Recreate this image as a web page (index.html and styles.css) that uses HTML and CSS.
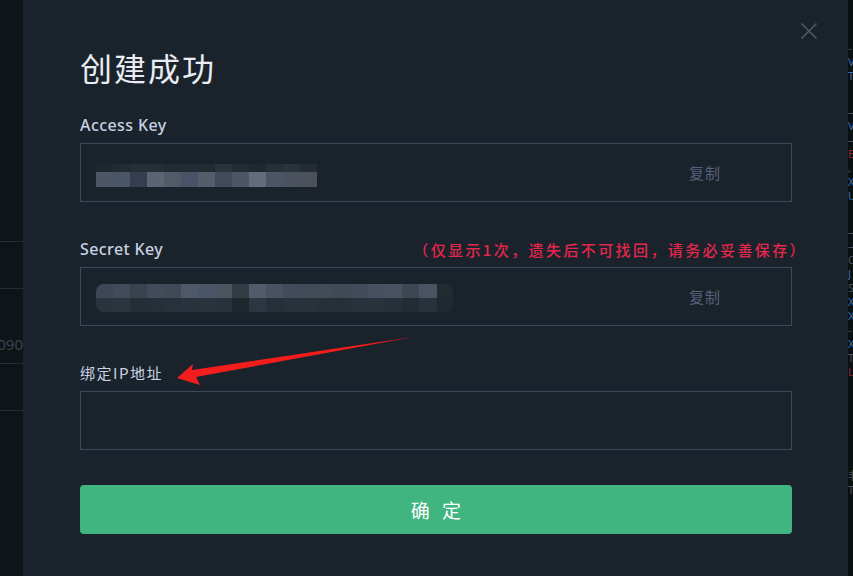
FILE: index.html
```html
<!DOCTYPE html>
<html lang="zh-CN">
<head>
<meta charset="utf-8">
<title>创建成功</title>
<link rel="stylesheet" href="styles.css">
</head>
<body>
<div class="page">
  <div class="side-left">
    <div class="row r1"></div>
    <div class="row r2"></div>
    <div class="row r3"><span class="num">o090,</span></div>
    <div class="row r4"></div>
  </div>
  <div class="modal">
    <button class="close" aria-label="关闭">
      <svg width="18" height="18" viewBox="0 0 18 18"><path d="M1.5 1.5 L16.5 16.5 M16.5 1.5 L1.5 16.5" stroke="#4f5a66" stroke-width="1.6" fill="none"/></svg>
    </button>
    <h1 class="title">创建成功</h1>
    <div class="field first">
      <div class="label-row"><label class="label">Access Key</label></div>
      <div class="input">
        <div class="blur blur-ak"></div>
        <span class="copy">复制</span>
      </div>
    </div>
    <div class="field">
      <div class="label-row">
        <label class="label">Secret Key</label>
        <span class="note">（仅显示1次，遗失后不可找回，请务必妥善保存）</span>
      </div>
      <div class="input">
        <div class="blur blur-sk"></div>
        <span class="copy">复制</span>
      </div>
    </div>
    <div class="field">
      <div class="label-row"><label class="label label-cn">绑定IP地址</label></div>
      <div class="input"></div>
    </div>
    <button class="confirm">确 定</button>
    <svg class="arrow" width="853" height="576" viewBox="0 0 853 576">
      <polygon points="177,378 193,364 192,370 413,337 196,377 200,385" fill="#f41d1d"/>
    </svg>
  </div>
  <div class="side-right">
    <span class="g gd">-</span>
    <span class="g gb">V</span>
    <span class="g gb">T</span>
    <span class="g gd sp">—</span>
    <span class="g gb">V</span>
    <span class="g gd">—</span>
    <span class="g gr">E</span>
    <span class="g gd">,</span>
    <span class="g gb">X</span>
    <span class="g gb">U</span>
    <span class="g gd sp">—</span>
    <span class="g gd">—</span>
    <span class="g gd">C</span>
    <span class="g gb">J</span>
    <span class="g gd">S</span>
    <span class="g gb">X</span>
    <span class="g gb">X</span>
    <span class="g gd">-</span>
    <span class="g gb">X</span>
    <span class="g gd">T</span>
    <span class="g gr">L</span>
    <span class="g gd sp2">非</span>
    <span class="g gd">T</span>
  </div>
</div>
</body>
</html>
```
FILE: styles.css
```css
* { box-sizing: border-box; }
html, body { margin: 0; padding: 0; }
body {
  width: 853px;
  height: 576px;
  overflow: hidden;
  background: #0e1418;
  font-family: "Noto Sans", "Noto Sans CJK SC", sans-serif;
}
.page {
  display: flex;
  height: 576px;
  position: relative;
}
.side-left {
  width: 23px;
  flex: none;
  background: #0e1418;
  overflow: hidden;
  position: relative;
}
.side-left .row {
  border-top: 1px solid #262d35;
  height: 0;
  position: relative;
}
.r1 { margin-top: 241px; }
.r2 { margin-top: 46px; }
.r3 { margin-top: 74px; }
.r4 { margin-top: 46px; }
.num {
  position: absolute;
  right: -4px;
  top: -30px;
  font-size: 15px;
  color: #3d4452;
  white-space: nowrap;
}
.modal {
  width: 825px;
  flex: none;
  background: #1a232b;
  padding: 47px 57px 0 57px;
  position: relative;
}
.close {
  position: absolute;
  top: 22px;
  right: 30px;
  background: none;
  border: 0;
  padding: 0;
  width: 18px;
  height: 18px;
}
.close svg { display: block; }
.title {
  margin: 0;
  font-size: 32px;
  font-weight: 400;
  letter-spacing: 2px;
  line-height: 41px;
  color: #e9edf3;
  font-family: "Noto Sans CJK SC", sans-serif;
}
.field { margin-top: 37px; }
.field.first { margin-top: 27px; }
.label-row {
  display: flex;
  justify-content: space-between;
  align-items: center;
  height: 20px;
  margin-bottom: 8px;
}
.label {
  font-size: 16px;
  font-weight: 500;
  letter-spacing: 0.4px;
  color: #c9d1e2;
  line-height: 20px;
}
.label-cn {
  font-family: "Noto Sans CJK SC", sans-serif;
  font-size: 15px;
  font-weight: 400;
  letter-spacing: 1.5px;
}
.note {
  font-family: "Noto Sans CJK SC", sans-serif;
  font-size: 15px;
  font-weight: 500;
  color: #e5264d;
  margin-right: -16px;
  letter-spacing: 2.4px;
}
.input {
  height: 59px;
  width: 712px;
  border: 1px solid #3a4a5b;
  display: flex;
  align-items: center;
  justify-content: space-between;
  padding: 0 70px 0 15px;
}
.copy {
  font-family: "Noto Sans CJK SC", sans-serif;
  font-size: 15px;
  letter-spacing: 1px;
  color: #56607a;
}
.blur-ak {
  width: 221px;
  height: 23px;
  margin-top: 6px;
  background:
    linear-gradient(90deg,
      #4e5666 0 17px, #4a5568 17px 34px, #363d50 34px 51px, #5a6472 51px 68px,
      #525a68 68px 85px, #4a526a 85px 102px, #555d6a 102px 119px, #434b5a 119px 136px,
      #4e5566 136px 153px, #636b7c 153px 170px, #4d5564 170px 187px, #4a525f 187px 204px,
      #4c5058 204px 221px) 0 8px / 221px 15px no-repeat,
    linear-gradient(90deg,
      #1e262e 0 17px, #222a32 17px 34px, #262e36 34px 51px, #252d35 51px 68px,
      #222a32 68px 85px, #232b33 85px 102px, #222a32 102px 119px, #2a323c 119px 136px,
      #222a32 136px 153px, #1f272f 153px 170px, #262e38 170px 187px, #2a323c 187px 204px,
      #232b33 204px 221px) 0 0 / 221px 8px no-repeat;
}
.blur-sk {
  width: 357px;
  height: 28px;
  margin-top: 3px;
  border-radius: 8px;
  background:
    linear-gradient(90deg,
      #3e4755 0 17px, #434b5a 17px 34px, #3a4250 34px 51px, #434b5a 51px 68px,
      #414957 68px 85px, #4f5868 85px 102px, #4a5668 102px 119px, #4b5560 119px 136px,
      #333c44 136px 153px, #525b6c 153px 170px, #4a5262 170px 187px, #434b5a 187px 204px,
      #424a58 204px 221px, #434b58 221px 238px, #414957 238px 255px, #434b5a 255px 272px,
      #474f60 272px 289px, #4a5262 289px 306px, #3e4653 306px 323px, #4b5362 323px 341px,
      #222a32 341px 357px) 0 0 / 357px 14px no-repeat,
    linear-gradient(90deg,
      #2a323c 0 17px, #2c343e 17px 34px, #252d36 34px 51px, #262e38 51px 68px,
      #283039 68px 85px, #29313c 85px 102px, #2a323c 102px 119px, #29313b 119px 136px,
      #1f272e 136px 153px, #2c3640 153px 170px, #262e38 170px 187px, #28303a 187px 204px,
      #29313b 204px 221px, #272f39 221px 238px, #262e38 238px 255px, #28303a 255px 272px,
      #29313b 272px 289px, #272f39 289px 306px, #232b34 306px 323px, #29313b 323px 341px,
      #212930 341px 357px) 0 14px / 357px 14px no-repeat;
}
.confirm {
  display: block;
  margin-top: 35px;
  width: 712px;
  height: 49px;
  border: 0;
  border-radius: 4px;
  background: #41b57f;
  color: #ffffff;
  font-family: "Noto Sans CJK SC", sans-serif;
  font-size: 19px;
  letter-spacing: 4px;
  padding: 0 0 0 4px;
}
.arrow {
  position: absolute;
  left: -23px;
  top: 0;
  pointer-events: none;
}
.side-right {
  width: 5px;
  flex: none;
  background: #0b1013;
  overflow: hidden;
  display: flex;
  flex-direction: column;
  padding-top: 41px;
  font-size: 11px;
  line-height: 14px;
}
.g { display: block; white-space: nowrap; }
.gb { color: #3d6fab; }
.gd { color: #4a5260; }
.gr { color: #8a2a35; }
.sp { margin-top: 22px; }
.sp2 { margin-top: 90px; }
```
